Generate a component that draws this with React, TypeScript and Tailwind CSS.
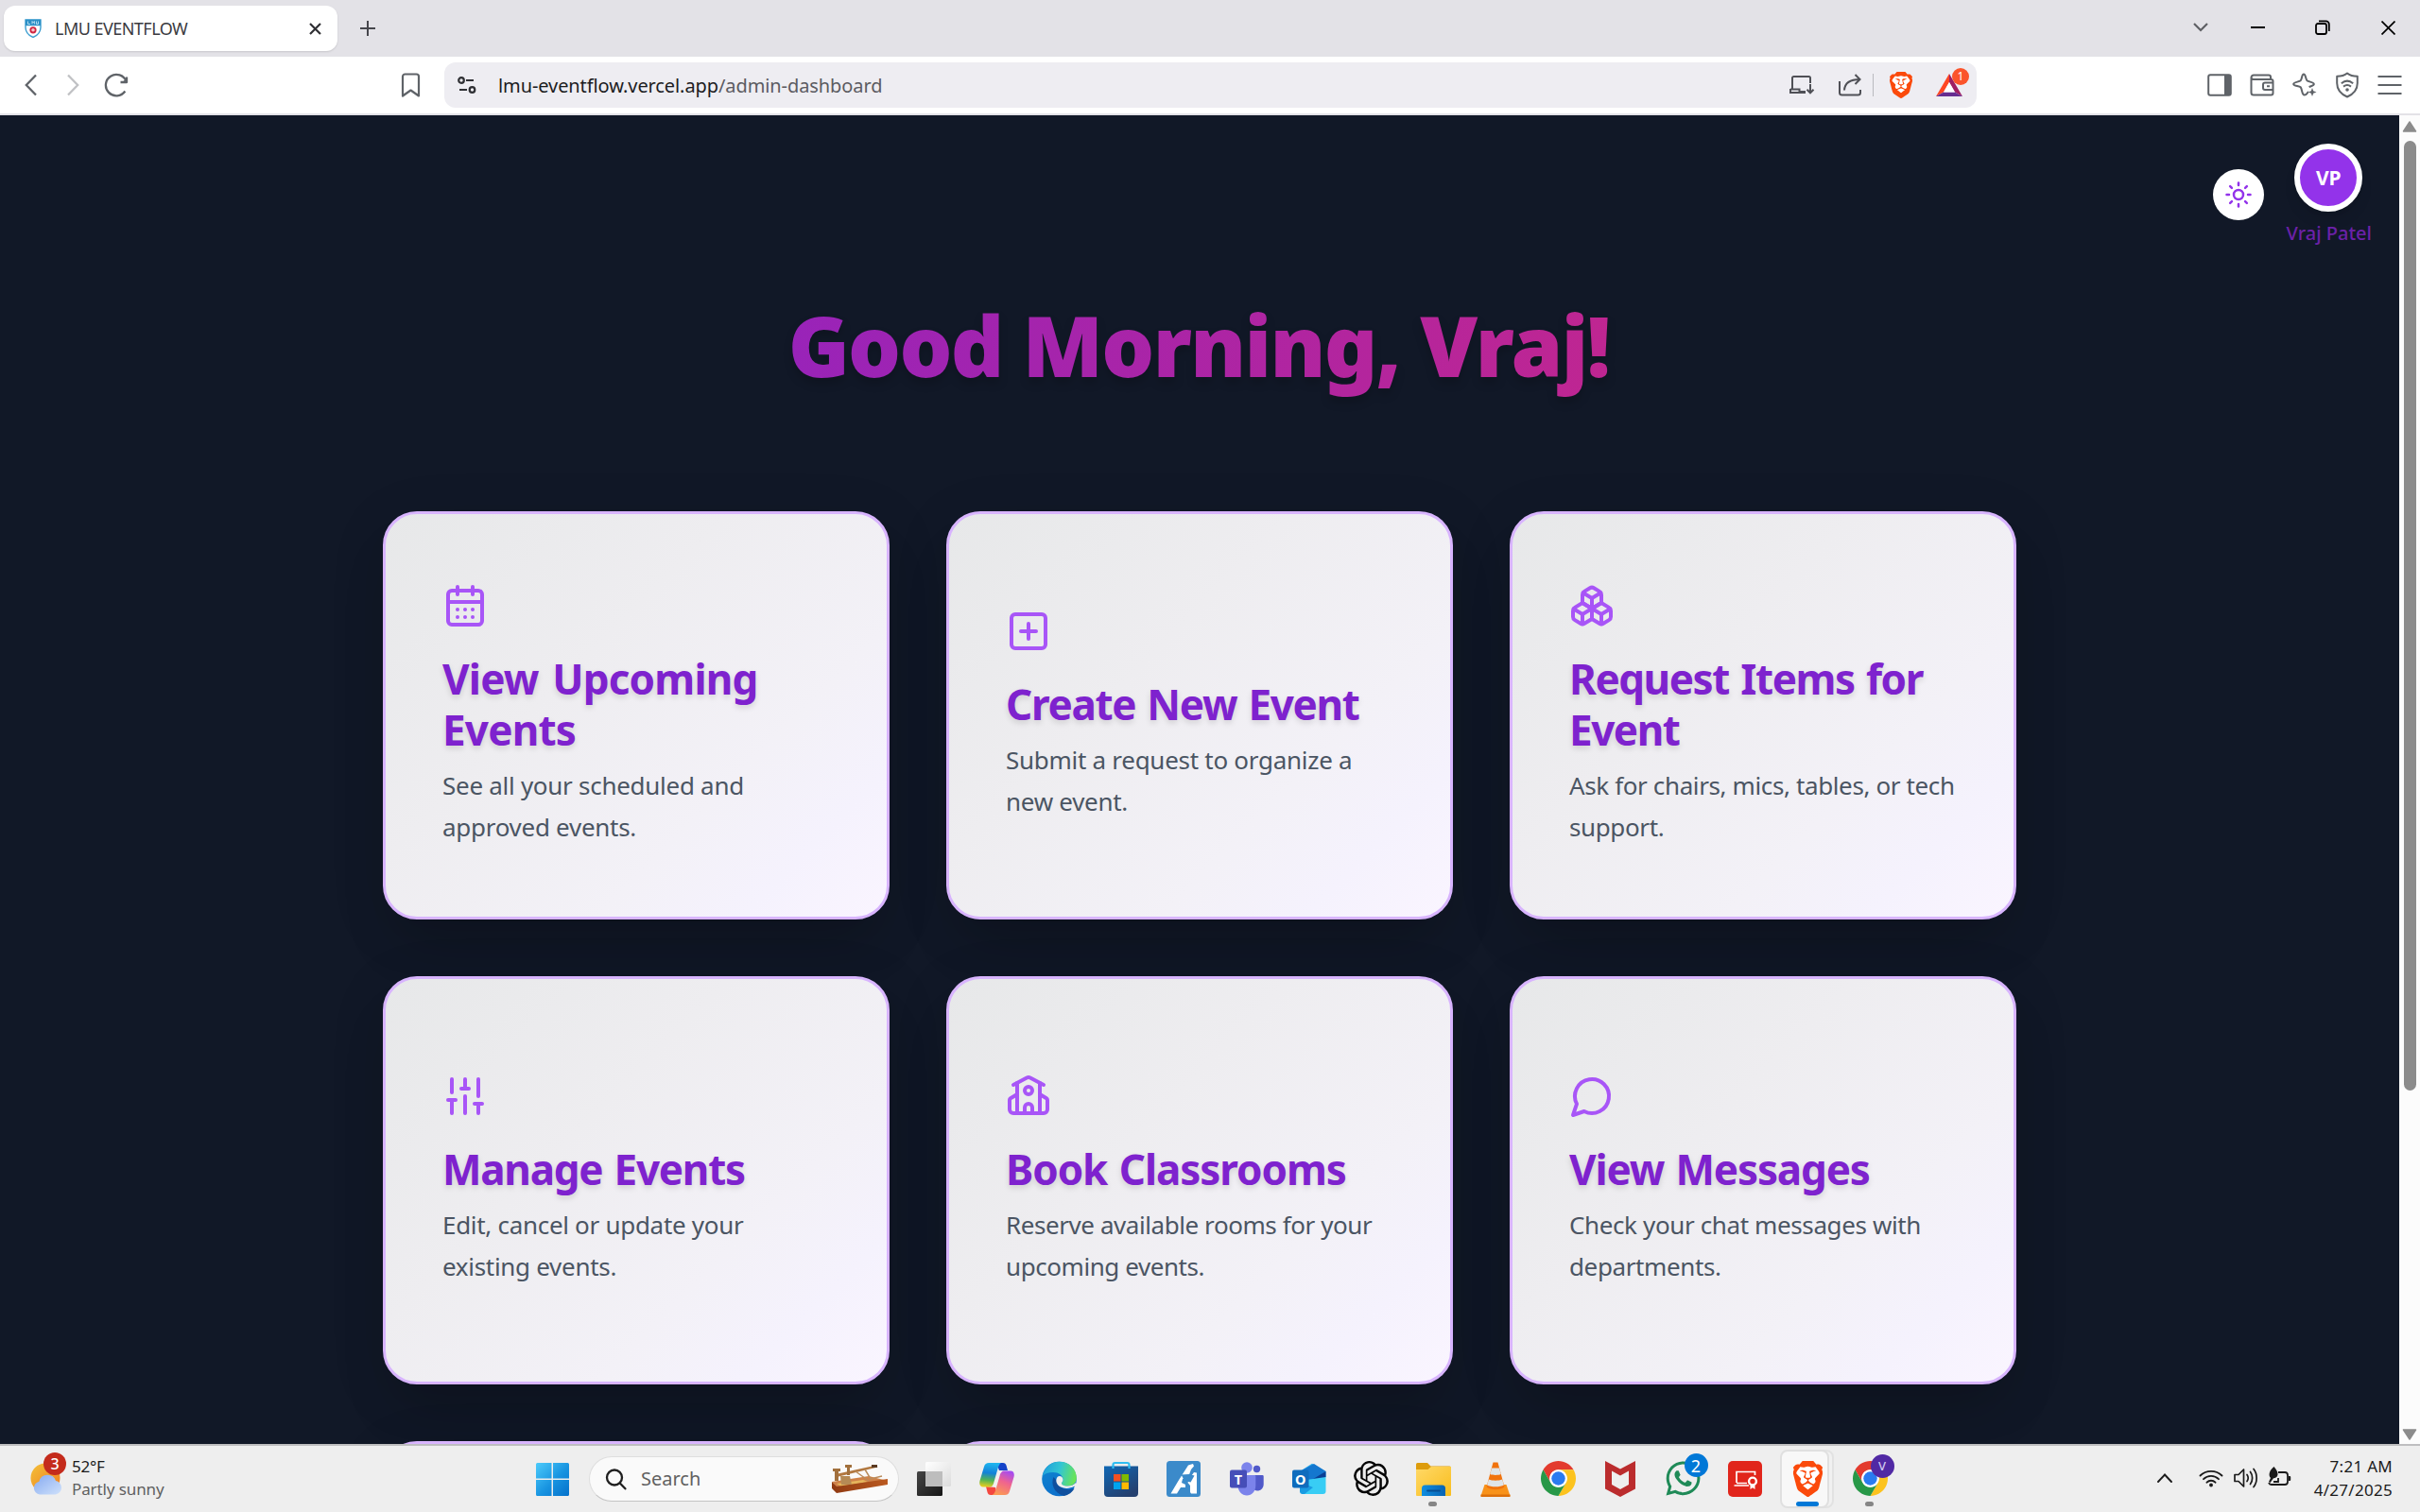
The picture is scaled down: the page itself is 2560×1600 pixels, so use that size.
import type { ReactNode } from "react";
import { Boxes, CalendarDays, School, SlidersVertical, SquarePlus, Sun } from "lucide-react";
import { SiBrave, SiOpenai } from "react-icons/si";
import { FaWhatsapp } from "react-icons/fa";

function MessageBubble() {
  return (
    <svg width="48" height="48" viewBox="0 0 24 24" fill="none" stroke="currentColor" strokeWidth="2" strokeLinecap="round" strokeLinejoin="round">
      <path d="M7.9 20A9 9 0 1 0 4 16.1L2 22Z" />
    </svg>
  );
}

const cards: { icon: ReactNode; title: string; tracking: string; text: string; textTracking: string }[] = [
  { icon: <CalendarDays size={48} />, title: "View Upcoming Events", tracking: "tracking-[-0.8px] [word-spacing:4px]", text: "See all your scheduled and approved events.", textTracking: "tracking-[-0.28px]" },
  { icon: <SquarePlus size={48} />, title: "Create New Event", tracking: "tracking-[-1.3px] [word-spacing:2px]", text: "Submit a request to organize a new event.", textTracking: "tracking-[-0.28px]" },
  { icon: <Boxes size={48} />, title: "Request Items for Event", tracking: "tracking-[-1.45px] [word-spacing:2.5px]", text: "Ask for chairs, mics, tables, or tech support.", textTracking: "tracking-[-0.38px]" },
  { icon: <SlidersVertical size={48} />, title: "Manage Events", tracking: "tracking-[-1.25px] [word-spacing:2px]", text: "Edit, cancel or update your existing events.", textTracking: "tracking-[-0.3px]" },
  { icon: <School size={48} />, title: "Book Classrooms", tracking: "tracking-[-1.05px] [word-spacing:2px]", text: "Reserve available rooms for your upcoming events.", textTracking: "tracking-[-0.43px]" },
  { icon: <MessageBubble />, title: "View Messages", tracking: "tracking-[-1.15px] [word-spacing:2px]", text: "Check your chat messages with departments.", textTracking: "tracking-[-0.38px]" },
  { icon: <CalendarDays size={48} />, title: "", tracking: "", text: "", textTracking: "" },
  { icon: <SquarePlus size={48} />, title: "", tracking: "", text: "", textTracking: "" },
];

/* ---------- browser chrome ---------- */

function TabStrip() {
  return (
    <div className="flex h-[60px] items-center bg-[#e3e2e7]">
      <div className="ml-1 flex h-12 w-[353px] items-center rounded-xl bg-white pr-[17px] pl-[22px] shadow-[0_1px_2px_rgba(0,0,0,0.12)]">
        <svg width="18" height="20" viewBox="0 0 18 20">
          <path d="M1 1h16v8c0 5-3.500 8.500-8 10.500C4.500 17.500 1 14 1 9Z" fill="#fff" stroke="#3d9ed0" strokeWidth="1.400" />
          <path d="M1 .8h16v6.400H1z" fill="#2b8fc6" />
          <path d="M3.500 2.500v3h2.500M8 5.500v-3l1.200 1.500 1.200-1.500v3M12.500 2.500v3h2v-3" stroke="#bfe2f4" strokeWidth=".9" fill="none" />
          <circle cx="9" cy="11.800" r="2.700" fill="#f7c6cc" stroke="#cf2440" strokeWidth="1.800" />
        </svg>
        <span className="ml-3.5 text-[18px] leading-6 tracking-[-0.53px] whitespace-nowrap text-[#3b3b3f]">LMU EVENTFLOW</span>
        <svg className="ml-auto" width="13" height="13" viewBox="0 0 13 13" stroke="#303034" strokeWidth="2.200">
          <path d="M1 1l11 11M12 1L1 12" />
        </svg>
      </div>
      <svg className="ml-6" width="16" height="16" viewBox="0 0 16 16" stroke="#46464c" strokeWidth="2">
        <path d="M8 0v16M0 8h16" />
      </svg>
      <div className="mr-[26px] mb-0.5 ml-auto flex items-center">
        <svg width="16" height="10" viewBox="0 0 16 10" fill="none" stroke="#5f6064" strokeWidth="2.200">
          <path d="M1 1l7 7 7-7" />
        </svg>
        <div className="ml-[45px] h-0.5 w-[15px] bg-black" />
        <svg className="ml-[53px]" width="16" height="16" viewBox="0 0 16 16" fill="none" stroke="#000" strokeWidth="1.800">
          <rect x="1" y="4" width="11" height="11" rx="2" />
          <path d="M4 1.400h7.500a3.300 3.300 0 0 1 3.300 3.300V12" />
        </svg>
        <svg className="ml-[54px]" width="15" height="15" viewBox="0 0 15 15" stroke="#000" strokeWidth="1.700">
          <path d="M.5.5l14 14M14.500.5l-14 14" />
        </svg>
      </div>
    </div>
  );
}

function BraveLogo({ width, height }: { width: number; height: number }) {
  return (
    <svg width={width} height={height} viewBox="2 0 20 24" preserveAspectRatio="none">
      <path d="M6 4h12l2 4-2 9-6 5-6-5-2-9Z" fill="#fff" />
      <SiBrave size={24} color="#fb4a0b" />
    </svg>
  );
}

function Toolbar() {
  return (
    <div className="flex h-[62px] items-center border-b-2 border-[#e3e2e7] bg-white">
      <svg className="ml-[26px]" width="13" height="24" viewBox="0 0 13 24" fill="none" stroke="#5f6368" strokeWidth="2.300">
        <path d="M12 1.500L1.800 12 12 22.500" />
      </svg>
      <svg className="ml-[32px]" width="13" height="24" viewBox="0 0 13 24" fill="none" stroke="#c0c1c4" strokeWidth="2.300">
        <path d="M1 1.500L11.200 12 1 22.500" />
      </svg>
      <svg className="ml-[26px]" width="27" height="26" viewBox="0 0 27 26" fill="none" stroke="#5f6368" strokeWidth="2.300">
        <path d="M22.300 19.500A11.200 11.200 0 1 1 23.500 9" />
        <path d="M17.500 10h6.500V4.500" strokeLinejoin="round" />
        <path d="M19 10.200l6-5.200v5.200Z" fill="#5f6368" stroke="none" />
      </svg>
      <svg className="ml-[287px]" width="21" height="26" viewBox="0 0 21 26" fill="none" stroke="#5f6368" strokeWidth="2.200" strokeLinejoin="round">
        <path d="M2 4a2.500 2.500 0 0 1 2.500-2.500h12A2.500 2.500 0 0 1 19 4v20.500l-8.500-6-8.500 6Z" />
      </svg>
      <div className="ml-[25px] flex h-12 w-[1621px] items-center rounded-xl bg-[#eeedf2] pr-[15px] pl-[14px]">
        <svg width="20" height="18" viewBox="0 0 20 18" fill="none" stroke="#2f3034" strokeWidth="2.200">
          <circle cx="4" cy="4" r="2.800" />
          <path d="M9 4h8M2 14h8" />
          <circle cx="15.500" cy="14" r="2.800" />
        </svg>
        <span className="mt-0.5 ml-[23px] text-[20px] leading-7 tracking-[-0.09px] whitespace-nowrap text-[#5b5b61]">
          <span className="text-[#1c1c1f]">lmu-eventflow.vercel.app</span>/admin-dashboard
        </span>
        <svg className="ml-auto" width="27" height="20" viewBox="0 0 27 20" fill="none" stroke="#4f5056" strokeWidth="2">
          <path d="M22 8V2.500A1.500 1.500 0 0 0 20.500 1h-16A1.500 1.500 0 0 0 3 2.500V14M1 14.500h9.500v2.500H17M1 14v4h16" />
          <path d="M22 9v9M18.500 14.800L22 18.300l3.500-3.500" />
        </svg>
        <svg className="ml-6" width="26" height="24" viewBox="0 0 26 24" fill="none" stroke="#4f5056" strokeWidth="2">
          <path d="M2 8v12a2.500 2.500 0 0 0 2.500 2.500h17A2.500 2.500 0 0 0 24 20v-3" />
          <path d="M7 17.500C7.500 9.500 13 6 23.500 6M18.500 1l5 5-5 5" />
        </svg>
        <div className="ml-[11px] h-6 w-px bg-[#b9b9be]" />
        <div className="ml-[17px]"><BraveLogo width={24} height={28} /></div>
        <div className="relative ml-[25px]">
          <svg width="28" height="24" viewBox="0 0 28 24">
            <path d="M14 0L0 24l8-4.500L14 9Z" fill="#ff4724" />
            <path d="M14 0l14 24-8-4.500L14 9Z" fill="#9e1f63" />
            <path d="M0 24h28l-8-4.500H8Z" fill="#662d91" />
            <path d="M14 9l6 10.500H8Z" fill="#fff" />
          </svg>
          <span className="absolute -top-[6px] left-[17px] flex h-[18px] w-[18px] items-center justify-center rounded-full bg-[#fb542b] text-[12px] leading-none text-white">1</span>
        </div>
      </div>
      <div className="mr-[19px] ml-auto flex items-center gap-[19px] text-[#5f6368]">
        <svg width="26" height="24" viewBox="0 0 26 24" fill="none" stroke="currentColor" strokeWidth="2">
          <rect x="1.200" y="1.200" width="23.600" height="21.600" rx="2" />
          <path d="M18 1h6.500v22H18z" fill="currentColor" stroke="none" />
        </svg>
        <svg width="26" height="24" viewBox="0 0 26 24" fill="none" stroke="currentColor" strokeWidth="2">
          <path d="M22 6V3.500A2 2 0 0 0 20 1.500H4A2.500 2.500 0 0 0 1.500 4M1.500 3.500V20A2.500 2.500 0 0 0 4 22.500h18.500A2 2 0 0 0 24.500 20.500V8a2 2 0 0 0-2-2H4a2.500 2.500 0 0 1-2.500-2.500" />
          <path d="M24.500 9.500H16a2 2 0 0 0-2 2V15a2 2 0 0 0 2 2h8.500M18 13.200h3" />
        </svg>
        <svg width="26" height="26" viewBox="0 0 26 26" fill="none" stroke="currentColor" strokeWidth="2" strokeLinejoin="round">
          <path d="M17 20.500c-1.200 0-1.600 3-4.300 3-2.700 0-2.400-6.500-4-8.200C7 13.600 1.200 14.300 1.200 12S7 9.800 8.700 8.200C10.400 6.500 9.800 1.500 12 1.500s1.800 5 3.500 6.700c1.700 1.600 7.300 1.500 7.300 3.800 0 1.800-3.200 2-5.200 3" />
          <path d="M21 16l1.200 3.300 3.300 1.200-3.300 1.200L21 25l-1.200-3.300-3.300-1.200 3.300-1.200Z" fill="currentColor" stroke="none" />
        </svg>
        <svg width="26" height="28" viewBox="0 0 26 28" fill="none" stroke="currentColor" strokeWidth="2" strokeLinejoin="round">
          <path d="M13 1.500c3 2.500 6.500 3.300 10.800 3.300V12c0 7-4 11.500-10.800 14.500C6.200 23.500 2.200 19 2.200 12V4.800C6.500 4.800 10 4 13 1.500Z" />
          <path d="M6.800 12.200c3.800-3.200 8.600-3.200 12.400 0M9 15.600c2.500-2 5.500-2 8 0" />
          <circle cx="13" cy="19" r="1.800" fill="currentColor" stroke="none" />
        </svg>
        <svg width="26" height="20" viewBox="0 0 26 20" stroke="currentColor" strokeWidth="2">
          <path d="M0.500 1h25M.5 10h25M.5 19h25" />
        </svg>
      </div>
    </div>
  );
}

/* ---------- page ---------- */

function DashboardPage() {
  return (
    <div className="flex h-[1406px]">
      <main className="w-[2538px] overflow-hidden bg-[#111827] pt-[30px]">
        <div className="flex h-[108px] items-center justify-end gap-6 pr-[29px]">
          <button className="flex h-[54px] w-[54px] items-center justify-center rounded-full bg-white text-[#9333ea]">
            <Sun size={30} />
          </button>
          <div className="flex flex-col items-center">
            <div className="mr-px flex h-[72px] w-[72px] items-center justify-center rounded-full border-[6px] border-white bg-[#9333ea] pt-0.5 text-[21px] font-bold text-white shadow-lg">VP</div>
            <span className="mt-2 -mb-0.5 text-[20px] leading-[30px] font-medium whitespace-nowrap text-[#6b21a8]">Vraj Patel</span>
          </div>
        </div>
        <div className="mx-auto w-[1728px]">
          <h1 className="mt-[60px] bg-[linear-gradient(90deg,#8622cc,#d2277e)] bg-clip-text pr-0.5 pb-[30px] text-center text-[88px] leading-[90px] font-black tracking-[-1.69px] text-transparent drop-shadow-[0_6px_5px_rgba(0,0,0,0.18)]">
            Good Morning, Vraj!
          </h1>
          <div className="mt-[101px] grid grid-cols-3 gap-[60px]">
            {cards.map((card, i) => (
              <div
                key={i}
                className="flex h-[432px] flex-col justify-center rounded-[36px] border-[3px] border-[#d8b4fe] bg-[linear-gradient(135deg,#e7e8e9_0%,#eeedf0_38%,#f3f1f7_68%,#f5f2fd_84%,#faf5ff_100%)] px-[60px] shadow-[0_12px_60px_rgba(0,0,0,0.1),0_38px_60px_-18px_rgba(0,0,0,0.18)]"
              >
                <div className="text-[#a855f7]">{card.icon}</div>
                <h2 className={"mt-[26px] text-[44px] leading-[54px] font-bold text-[#7e22ce] [text-shadow:0_3px_6px_rgba(0,0,0,0.13)] " + card.tracking}>
                  {card.title}
                </h2>
                <p className={"mt-[11px] -mb-px text-[26px] leading-[43.9px] text-[#4b5563] " + card.textTracking}>{card.text}</p>
              </div>
            ))}
          </div>
        </div>
      </main>
      <div className="flex w-[22px] flex-col items-center bg-[#fcfcfc] pt-[6px]">
        <svg width="16" height="12" viewBox="0 0 16 12"><path d="M8 1l6.500 10h-13Z" fill="#8b8b8b" stroke="#8b8b8b" strokeWidth="1.500" strokeLinejoin="round" /></svg>
        <div className="mt-[9px] h-[1005px] w-[13px] rounded-full bg-[#8b8b8b]" />
        <svg className="mt-auto mb-[4px]" width="16" height="12" viewBox="0 0 16 12"><path d="M8 11L1.500 1h13Z" fill="#8b8b8b" stroke="#8b8b8b" strokeWidth="1.500" strokeLinejoin="round" /></svg>
      </div>
    </div>
  );
}

/* ---------- taskbar ---------- */

function ChromeLogo() {
  return (
    <svg width="37" height="37" viewBox="2 2 44 44">
      <path d="M4.950 13A22 22 0 0 1 43.050 13H24A11 11 0 0 0 14.470 29.500Z" fill="#e33b2e" />
      <path d="M43.050 13A22 22 0 0 1 24 46L33.530 29.500A11 11 0 0 0 24 13Z" fill="#fcc31e" />
      <path d="M24 46A22 22 0 0 1 4.950 13L14.470 29.500A11 11 0 0 0 33.530 29.500Z" fill="#279847" />
      <circle cx="24" cy="24" r="11" fill="#fff" />
      <circle cx="24" cy="24" r="8.600" fill="#2a7bf0" />
    </svg>
  );
}

function AppCell({ children, mark, active }: { children: ReactNode; mark?: boolean; active?: boolean }) {
  return (
    <div className="relative flex h-[72px] w-[66px] items-center justify-center">
      {active && <div className="absolute top-[5px] left-[12px] h-[62px] w-[49px] rounded-lg border-2 border-[#e2e2e2] bg-[#f1f1f1]" />}
      {active && <div className="absolute top-[5px] left-[4px] h-[62px] w-[52px] rounded-lg border-2 border-[#e0e0e0] bg-[#f8f8f8]" />}
      <div className="relative">{children}</div>
      {mark && <div className="absolute bottom-[7px] left-[28px] h-[5px] w-[9px] rounded-full bg-[#858585]" />}
      {active && <div className="absolute bottom-[7px] left-[21px] h-[5px] w-6 rounded-full bg-[#0078d7]" />}
    </div>
  );
}

function Taskbar() {
  return (
    <div className="flex h-[72px] items-center border-t-2 border-[#bebec0] bg-[#eeeeee]">
      <div className="flex w-[567px] items-center pb-0.5 pl-8">
        <div className="relative h-[54px] w-[38px]">
          <svg width="38" height="54" viewBox="0 0 38 54">
            <defs>
              <linearGradient id="sun" x1="0" y1="0" x2="1" y2="1"><stop offset="0" stopColor="#f3c13a" /><stop offset="1" stopColor="#f07a1c" /></linearGradient>
              <linearGradient id="cloud" x1="0" y1="0" x2="1" y2="1"><stop offset="0" stopColor="#86aaf0" /><stop offset="1" stopColor="#cfe1fb" /></linearGradient>
            </defs>
            <circle cx="16" cy="27" r="15.500" fill="url(#sun)" />
            <path d="M10 44.500a7 7 0 0 1-.6-13.800 9.200 9.200 0 0 1 17.600-.6 7.300 7.300 0 0 1-.2 14.400Z" fill="url(#cloud)" />
          </svg>
          <span className="absolute top-0 left-[14px] flex h-6 w-6 items-center justify-center rounded-full bg-[#c42b1c] text-[16px] leading-none font-medium text-white">3</span>
        </div>
        <div className="ml-[6px] flex flex-col text-[17px] leading-6">
          <span className="tracking-[-0.24px] text-[#1b1b1b]">52°F</span>
          <span className="tracking-[-0.1px] text-[#5f5f5f]">Partly sunny</span>
        </div>
      </div>
      <svg width="35" height="35" viewBox="0 0 35 35">
        <defs><linearGradient id="win" x1="0" y1="0" x2="1" y2="1" gradientUnits="objectBoundingBox"><stop offset="0" stopColor="#4ccbfb" /><stop offset=".55" stopColor="#1793e0" /><stop offset="1" stopColor="#0571cb" /></linearGradient></defs>
        <path d="M1.500 0h15v16.500H0v-15A1.500 1.500 0 0 1 1.500 0ZM18 0h15.500A1.500 1.500 0 0 1 35 1.500v15H18ZM0 18h16.500v17h-15A1.500 1.500 0 0 1 0 33.500ZM18 18h17v15.500a1.500 1.500 0 0 1-1.500 1.500H18Z" fill="url(#win)" />
      </svg>
      <div className="ml-[21px] flex h-12 w-[328px] items-center rounded-full border border-[#dedede] border-b-[#c4c4c4] bg-[#fafafa] pr-[10px] pl-4">
        <svg width="23" height="23" viewBox="0 0 23 23" fill="none" stroke="#202020" strokeWidth="2.300" strokeLinecap="round">
          <circle cx="10" cy="9.500" r="8" />
          <path d="M15.800 15.500l5.600 5.800" />
        </svg>
        <span className="ml-[15px] text-[20px] leading-7 text-[#616161]">Search</span>
        <svg className="ml-auto" width="61" height="32" viewBox="0 0 61 32">
          <defs><linearGradient id="wood" x1="0" y1="0" x2="1" y2="0"><stop offset="0" stopColor="#8f3a12" /><stop offset="1" stopColor="#bb5a20" /></linearGradient></defs>
          <path d="M1 19L40 13l20 5-54 7Z" fill="#cf8249" />
          <path d="M6 21l28-4 5 2-28 5Z" fill="#e5b55c" />
          <path d="M1 19l5 5 54-8v6L6 31l-5-5Z" fill="url(#wood)" />
          <path d="M5 11L48 1.500l1.500 2L6 14Z" fill="#b27840" />
          <path d="M26 8l14 10M36 6l6 10 12-3" stroke="#b98c5c" strokeWidth="1.500" fill="none" />
          <path d="M10 13h10l2 9H11Z" fill="#b58a55" />
          <path d="M2 5h8v3H8v10H4V8H2ZM15 1h7v3h-2v8h-3V4h-2Z" fill="#a2703c" />
          <path d="M43 1h6v3h-6z" fill="#5a3a22" />
        </svg>
      </div>
      <div className="ml-1 flex items-center pb-px">
        <AppCell>
          <svg width="36" height="36" viewBox="0 0 36 36">
            <defs>
              <linearGradient id="tvd" x1="0" y1="0" x2="1" y2="1"><stop offset="0" stopColor="#454545" /><stop offset="1" stopColor="#161616" /></linearGradient>
              <linearGradient id="tvl" x1="0" y1="0" x2="1" y2="1"><stop offset="0" stopColor="#fff" /><stop offset="1" stopColor="#dcdcdc" /></linearGradient>
            </defs>
            <rect x="0" y="10" width="27" height="26" rx="1.500" fill="url(#tvd)" />
            <rect x="9" y="0" width="27" height="26" rx="1.500" fill="url(#tvl)" />
            <path d="M9 10h18v16H9z" fill="#bdbdbd" />
          </svg>
        </AppCell>
        <AppCell>
          <svg width="37" height="36" viewBox="0 0 37 36">
            <defs>
              <linearGradient id="cpa" x1=".3" y1="0" x2=".2" y2="1"><stop offset="0" stopColor="#1fb4ee" /><stop offset=".4" stopColor="#1281d8" /><stop offset=".7" stopColor="#52b355" /><stop offset="1" stopColor="#f2cf1c" /></linearGradient>
              <linearGradient id="cpb" x1=".7" y1="0" x2=".3" y2="1"><stop offset="0" stopColor="#a64bf0" /><stop offset=".45" stopColor="#f0648e" /><stop offset="1" stopColor="#fb9b52" /></linearGradient>
            </defs>
            <path d="M18 1h7c2 0 3 1 3.600 3L30 9h-9Z" fill="#1442c8" />
            <path d="M19 35h-7c-2 0-3-1-3.500-3L7 26l10 1Z" fill="#f4473f" />
            <path d="M10 1h13c-2 1-3 4-4 8l-3.500 12c-1 4-2 5.500-5 5.500H4C1 26.500-.5 24 .5 20L5 5c1-3 2.500-4 5-4Z" fill="url(#cpa)" />
            <path d="M27 35H13.500c2.500-1 3.500-4 4.500-8l3.500-12c1-4 2-5.500 5-5.500H33c3 0 4.500 2.500 3.500 6.500L32 31c-1 3-2.500 4-5 4Z" fill="url(#cpb)" />
            <path d="M20.500 10.500h4c-3 1-3.600 3-4.500 6l-2.200 7c-.6 1.500-1.500 2.500-3.600 2.500H14c1.500-1 2-3 2.800-6Z" fill="#f4f0ee" />
          </svg>
        </AppCell>
        <AppCell>
          <svg width="37" height="38" viewBox="0 0 37 38">
            <defs>
              <linearGradient id="eda" x1="0" y1=".3" x2="1" y2=".5"><stop offset="0" stopColor="#1f9fdc" /><stop offset=".5" stopColor="#33c6d2" /><stop offset="1" stopColor="#6ae553" /></linearGradient>
              <linearGradient id="edb" x1="0" y1="0" x2=".5" y2="1"><stop offset="0" stopColor="#0f87d0" /><stop offset="1" stopColor="#0d6fcb" /></linearGradient>
            </defs>
            <circle cx="18.500" cy="19" r="18.300" fill="url(#edb)" />
            <path d="M12.500 17c-3 7 0 17 11 20 5-1 9-4 11-8-8 3-16 0-17.500-7Z" fill="#0f4f9e" />
            <path d="M.8 16C3 6 10 .7 18.500.7 29 .7 36.800 8 36.800 18c0 5-4 8.500-9.500 8.500-4.500 0-6.500-1.500-6.300-3 .2-1.200 1.500-1.700 1.500-4 0-4-4.500-7.500-10.500-7.500C7 12 3 13.500.8 16Z" fill="url(#eda)" />
            <path d="M17 16.500c-3 3-2 8.500 3 11 5 2.300 10 1.500 14.500-.8 1.500 0 1.500 1 .6 2.300L37 27l-1-4c-2 2.500-5 3.500-8.500 3.500-4.500 0-6.800-1.500-6.500-3 .2-1.200 1.500-1.700 1.500-4 0-2.500-3-4.500-5.500-3Z" fill="#eeeeee" />
          </svg>
        </AppCell>
        <AppCell>
          <svg width="36" height="38" viewBox="0 0 36 38">
            <defs><linearGradient id="store" x1="0" y1="0" x2=".6" y2="1"><stop offset="0" stopColor="#0f67b4" /><stop offset="1" stopColor="#24406f" /></linearGradient></defs>
            <path d="M9.500 9V4a2 2 0 0 1 2-2h13a2 2 0 0 1 2 2v5" fill="none" stroke="#2fbdf2" strokeWidth="2.200" />
            <path d="M0 5.500h36V34a4 4 0 0 1-4 4H4a4 4 0 0 1-4-4Z" fill="url(#store)" />
            <path d="M9.500 5v3M26.500 5v3" stroke="#2fbdf2" strokeWidth="2.200" />
            <path d="M10 14h7.500v7.500H10z" fill="#f25022" /><path d="M18.500 14H26v7.500h-7.500z" fill="#7fba00" />
            <path d="M10 22.500h7.500V30H10z" fill="#00a4ef" /><path d="M18.500 22.500H26V30h-7.500z" fill="#ffb900" />
          </svg>
        </AppCell>
        <AppCell>
          <svg width="36" height="38" viewBox="0 0 36 38">
            <rect width="36" height="38" rx="3.500" fill="#3b8aca" />
            <path d="M23 4.500l5-1.500 1 2.500-3 3.500-3 8-6 2-1 4 4 2v3h-5l-4 6.500H4.500l8-13.500Z" fill="#fff" />
            <path d="M24.500 18l4.500-6 3 .5V34.500h-6l-1-1.500V26l-2.500-3Z" fill="#fff" />
            <path d="M15.500 14.500l8.500-.5 5.500 1.500-4 7-6.500-1.500Z" fill="#3b8aca" />
          </svg>
        </AppCell>
        <AppCell>
          <svg width="37" height="36" viewBox="0 0 37 36">
            <circle cx="29.500" cy="7.500" r="3.700" fill="#5059c9" /><circle cx="19" cy="6" r="5.800" fill="#7b83eb" />
            <path d="M24 14h11.500a1.200 1.200 0 0 1 1.200 1.200V24a6.500 6.500 0 0 1-12.700 2Z" fill="#5059c9" />
            <path d="M10 14h17a1.300 1.300 0 0 1 1.300 1.300V25c0 6-4 10.500-9.300 10.500S9.500 31 9.500 25Z" fill="#7b83eb" />
            <rect x="1" y="8.500" width="18" height="19" rx="2" fill="#464eb8" />
            <text x="10" y="23.500" fontSize="14.500" fontWeight="700" fill="#fff" textAnchor="middle" fontFamily="Noto Sans, sans-serif">T</text>
          </svg>
        </AppCell>
        <AppCell>
          <svg width="37" height="34" viewBox="0 0 37 34">
            <path d="M9 9L22 .8 36.500 9v6H9Z" fill="#28a8ea" />
            <path d="M12 7.500L24 1l12.500 8-18 14H12Z" fill="#1477cf" />
            <path d="M36.500 9L18 20l4 6 14.500-11Z" fill="#0a3f95" />
            <path d="M9 19l27.500-4v15a3 3 0 0 1-3 3H11.500L9 30Z" fill="#38cdf5" />
            <path d="M9 20l14 6-9 7h-2a3 3 0 0 1-3-3Z" fill="#199be2" />
            <rect x="1" y="7.500" width="17.500" height="19" rx="2" fill="#0f6cbd" />
            <text x="9.700" y="22.500" fontSize="14.500" fontWeight="700" fill="#fff" textAnchor="middle" fontFamily="Noto Sans, sans-serif">O</text>
          </svg>
        </AppCell>
        <AppCell><SiOpenai size={37} color="#050505" /></AppCell>
        <AppCell mark>
          <svg width="37" height="36" viewBox="0 0 37 36">
            <defs>
              <linearGradient id="fold" x1="0" y1="0" x2="1" y2="1"><stop offset="0" stopColor="#ffd968" /><stop offset="1" stopColor="#f9bd1d" /></linearGradient>
              <linearGradient id="foldb" x1="0" y1="0" x2="1" y2="0"><stop offset="0" stopColor="#108ee0" /><stop offset="1" stopColor="#0863b2" /></linearGradient>
            </defs>
            <path d="M0 2.500A1.500 1.500 0 0 1 1.500 1H12l3.500 3.500H35.500A1.500 1.500 0 0 1 37 6v5H0Z" fill="#dd9c0c" />
            <path d="M0 8h12.500l3.500-3H37v30a1 1 0 0 1-1 1H1a1 1 0 0 1-1-1Z" fill="url(#fold)" />
            <path d="M6 36v-8a3.500 3.500 0 0 1 3.500-3.500h18A3.500 3.500 0 0 1 31 28v8Z" fill="url(#foldb)" />
            <path d="M12 30.500h13" stroke="#084f93" strokeWidth="1.800" strokeLinecap="round" />
          </svg>
        </AppCell>
        <AppCell>
          <svg width="32" height="38" viewBox="0 0 32 38">
            <path d="M4.500 25h23l4 12H.5Z" fill="#f8921a" /><path d="M.5 35.500h31V38H.5z" fill="#dc700b" />
            <path d="M13.500 1.500h5l7 26c-4 3.500-15 3.500-19 0Z" fill="#f1730d" />
            <path d="M12 7.500h8l1.800 6.500c-3 1.200-8.600 1.200-11.600 0ZM8.800 19.500c4 1.600 10.400 1.600 14.400 0l1.700 6c-4 2.400-13.800 2.400-17.800 0Z" fill="#dfe4e8" />
          </svg>
        </AppCell>
        <AppCell><ChromeLogo /></AppCell>
        <AppCell>
          <svg width="32" height="38" viewBox="0 0 32 38">
            <path d="M0 0l16 8.500L32 0v29.500L16 38 0 29.500ZM7 10.500V25l9 5 9-5V10.500l-9 5Z" fill="#bb2c2d" />
          </svg>
        </AppCell>
        <AppCell>
          <FaWhatsapp size={41} color="#1f8a57" />
          <span className="absolute -top-[6px] left-[22px] flex h-[25px] w-[25px] items-center justify-center rounded-full bg-[#0078d7] text-[18px] leading-none text-white">2</span>
        </AppCell>
        <AppCell>
          <svg width="36" height="38" viewBox="0 0 36 38" fill="none" stroke="#fff" strokeWidth="1.700">
            <rect width="36" height="38" rx="5" fill="#e1251b" stroke="none" />
            <path d="M9 23V11.500h19.500V15M6.500 26H22M9 23.500h11" />
            <circle cx="26" cy="21.500" r="3.900" strokeWidth="2.400" />
            <path d="M23.500 25.500V30l2.500-1.800 2.500 1.800v-4.500" fill="#fff" stroke="none" />
          </svg>
        </AppCell>
        <AppCell active><BraveLogo width={31} height={38} /></AppCell>
        <AppCell mark>
          <ChromeLogo />
          <span className="absolute -top-[7px] left-[19px] flex h-[25px] w-[25px] items-center justify-center rounded-full bg-[#5129a4] text-[13px] leading-none font-medium text-[#cfc6ee]">V</span>
        </AppCell>
      </div>
      <div className="mr-[29px] ml-auto flex items-center pb-0.5">
        <svg width="16" height="10" viewBox="0 0 16 10" fill="none" stroke="#1b1b1b" strokeWidth="1.900" strokeLinecap="round"><path d="M1 9l7-7.500L15 9" /></svg>
        <svg className="ml-[28px]" width="26" height="20" viewBox="0 0 26 20" fill="none" stroke="#1b1b1b" strokeWidth="1.900" strokeLinecap="round">
          <path d="M1.500 7.500a16.500 16.500 0 0 1 23 0M5 11.200a11.300 11.300 0 0 1 16 0M8.500 14.700a6.300 6.300 0 0 1 9 0" />
          <circle cx="13" cy="17.500" r="1.900" fill="#1b1b1b" stroke="none" />
        </svg>
        <svg className="ml-[11px]" width="25" height="22" viewBox="0 0 25 22" fill="none" stroke="#1b1b1b" strokeWidth="1.700" strokeLinecap="round" strokeLinejoin="round">
          <path d="M1 7.500h4L10.500 2v18L5 14.500H1Z" />
          <path d="M14 7.500c1.400 2 1.400 5 0 7M17.500 4.500c2.800 3.600 2.800 9.400 0 13M21 1.500c4.200 5.200 4.200 13.800 0 19" />
        </svg>
        <svg className="ml-[10px]" width="26" height="24" viewBox="0 0 26 24" fill="none" stroke="#1b1b1b" strokeWidth="1.800">
          <path d="M12 6h7a3 3 0 0 1 3 3v7a3 3 0 0 1-3 3H5a3 3 0 0 1-3-2" />
          <path d="M23 10h1.200a1 1 0 0 1 1 1v3a1 1 0 0 1-1 1H23Z" fill="#1b1b1b" stroke="none" />
          <path d="M7.500 0c3 3.500 4.300 6 4 8.500-.4 2.600-2.300 3.800-4.500 3.800L3.500 17 2 16l2-4C1 9 3 3.500 7.500 0Z" fill="#1b1b1b" stroke="none" />
          <path d="M12 12v4H7" />
        </svg>
        <div className="ml-[24px] flex flex-col items-end text-[17px] leading-[25px] tracking-[0.28px] text-[#1b1b1b]">
          <span>7:21 AM</span>
          <span>4/27/2025</span>
        </div>
      </div>
    </div>
  );
}

export default function App() {
  return (
    <div className="flex h-[1600px] w-[2560px] flex-col overflow-hidden font-['Noto_Sans','Open_Sans',sans-serif]">
      <TabStrip />
      <Toolbar />
      <DashboardPage />
      <Taskbar />
    </div>
  );
}
